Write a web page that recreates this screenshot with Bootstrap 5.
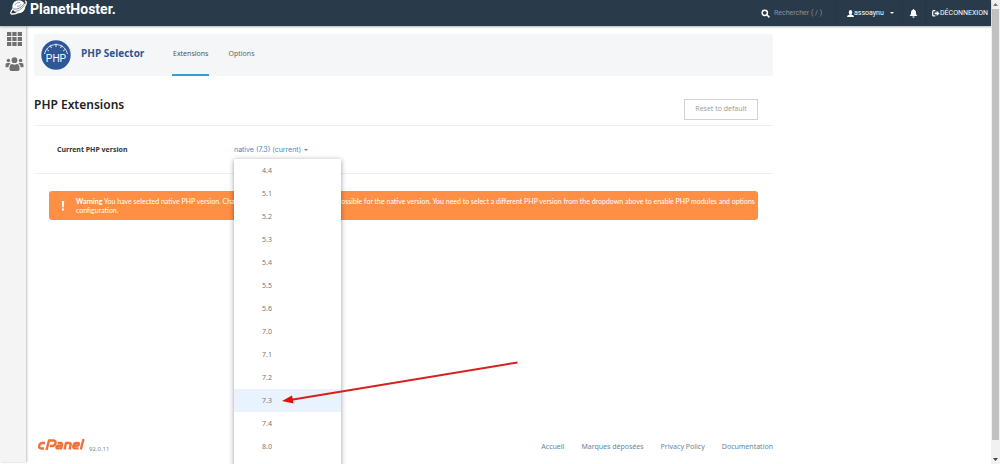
<!DOCTYPE html>
<html lang="fr">
<head>
<meta charset="utf-8">
<meta name="viewport" content="width=device-width, initial-scale=1">
<title>PHP Selector</title>
<link rel="stylesheet" href="https://cdn.jsdelivr.net/npm/bootstrap@5.3.0/dist/css/bootstrap.min.css">
<style>
body{font-family:"Noto Sans","Open Sans",sans-serif;font-size:7px;line-height:10px;color:#333;overflow:hidden;background:#fff}
a{text-decoration:none}
.page-shell{height:100vh}
.topbar{height:26px;background:#293a4a;box-shadow:0 1px 2px rgba(0,0,0,.3);z-index:3;font-family:Roboto,"Open Sans",sans-serif}
.brand-link{margin-left:10px;gap:3px;height:26px;color:#fff;font-size:14px;line-height:16px;font-weight:700}
.brand-link span{padding-top:1px}
.brand-link:hover{color:#fff}
.search-field{width:61px;background:transparent;border:0;padding:0;color:#fff;font-size:7px;line-height:10px;outline:0}
.search-field::placeholder{color:#8a949d;opacity:1}
.topbar button,.topbar .logout{height:26px;background:none;border:0;border-left:1px solid #263643;color:#fff;font-size:7px}
.topbar .account{width:67px;padding:0 8px 0 11px}
.topbar .alerts{width:23px;padding:0 6px}
.topbar .logout{width:66px;padding:0 0 0 6px;white-space:nowrap}
.caret{width:0;height:0;border:2px solid transparent;border-top-color:currentColor;border-bottom:0}
.sidebar{width:26px;background:#f4f4f4;box-shadow:1px 0 2px rgba(0,0,0,.25);padding:6px 0 0 2px;gap:11px;margin-bottom:2px}
.sidebar a{line-height:0}
.content-col{max-width:747px;padding:8px 0 0 8px}
.app-head{height:42px;background:#f5f6f8;border-radius:2px;padding-left:7px}
.app-title{font-family:"Open Sans",sans-serif;font-size:10px;line-height:14px;font-weight:700;color:#2f5590;width:91px;margin:0 0 4px 10px}
.app-tab{color:#666;display:flex;align-items:center;border-bottom:2px solid transparent;margin-right:18px;height:41px;padding:0 1px 1px}
.app-tab.active{color:#555;border-color:#3d9cce}
.head-row{height:50px;border-bottom:1px solid #efefef;padding:17px 15px 0 0}
.page-title{font-size:12px;line-height:16px;font-weight:600;color:#222;margin-bottom:9px}
.reset-btn{width:74px;height:21px;border:1px solid #d2d2d2;border-radius:0;color:#999;font-family:"Open Sans",sans-serif;font-size:7px;line-height:10px;padding:0}
.version-row{height:48px;border-bottom:1px solid #efefef;padding-left:23px}
.version-label{width:177px;font-weight:700;padding-top:1px}
.version-toggle{border:0;background:none;padding:0;color:#4289c6;font-family:Inter,Roboto,sans-serif;font-size:7px;line-height:10px;gap:3px}
.version-menu{top:33px;left:200px;width:107px;background:#fff;box-shadow:0 1px 5px rgba(0,0,0,.4);z-index:2;padding-bottom:23px}
.version-menu a{display:block;height:23px;line-height:23px;padding-left:28px;color:#777}
.version-menu a.active{background:#e8f3fd}
.warning-box{margin:17px 15px 0 15px;min-height:29px;background:#ff8f45;color:#fff;border-radius:3px;font-family:Lato,sans-serif;font-size:7px;line-height:9px;padding:0 1px 0 11px;gap:10px}
.footer-row{padding-bottom:12px}
.footer-row nav{gap:17px}
.footer-row a{color:#5f87a0}
.release{font-size:6px;color:#888;line-height:6px;margin-left:2px}
.pointer-arrow{left:282px;top:358px;z-index:5;pointer-events:none}
.scroll-rail{width:9px;background:#f1f1f1}
.scroll-rail i{height:9px}
.scroll-thumb{background:#c1c1c1;flex:1;margin:0 1px 15px}
</style>
</head>
<body>
<div class="page-shell d-flex overflow-hidden">
<div class="d-flex flex-column flex-grow-1 position-relative">
  <header class="topbar d-flex align-items-center position-relative">
    <a class="brand-link d-flex" href="#">
      <svg width="17" height="15" viewBox="0 0 17 15" fill="none" stroke="#fff"><circle cx="8.800" cy="6.700" r="6.500" fill="#fff" stroke="none"/><path d="M3.300 8.500C0 12 0 14 2.500 14c3.500.3 8.500-2.500 11.500-6.500 2.700-3.500 3-6 1-6.700" stroke-width="1.300"/><path d="M3.200 8.800c4 1.200 9.300-1.500 11.300-6" stroke="#4c5b69" stroke-width=".7"/><path d="M4 11.600c3.500 0 8-2.500 10.200-6.300" stroke="#4c5b69" stroke-width=".6"/><path d="M4.800 5c1.700-2.500 4-3 5.200-2.500M7 6.300c2 .3 3.500-.8 4-2" stroke="#7b8995" stroke-width=".8"/></svg>
      <span>PlanetHoster.</span>
    </a>
    <div class="ms-auto d-flex align-items-center">
      <label for="search" class="me-1 d-flex"><svg width="9" height="9" viewBox="0 0 9 9" fill="none" stroke="#fff" stroke-width="1.500"><circle cx="3.800" cy="3.800" r="2.600"/><path d="m5.800 5.800 2.600 2.600"/></svg></label>
      <input id="search" class="search-field" type="text" placeholder="Rechercher ( / )">
      <button type="button" class="account d-flex align-items-center"><svg width="7" height="7" viewBox="0 0 7 7" fill="#fff"><ellipse cx="3.500" cy="2.200" rx="1.700" ry="2.200"/><path d="M2.700 3.500h1.600v1L6.500 5.500 7 7H0l.5-1.500 2.200-1z"/></svg><span>assoaynu</span><i class="caret ms-auto"></i></button>
      <button type="button" class="alerts d-flex align-items-center" aria-label="Notifications"><svg width="9" height="9" viewBox="0 0 9 9" fill="#fff"><path d="M4.500 0C5 0 5 .7 5 .7 6.800 1.100 7 2.500 7 4c0 1.500.6 2.200 1.600 3H.4C1.400 6.200 2 5.500 2 4c0-1.500.2-2.900 2-3.300C4 .7 4 0 4.500 0M3.300 7.500h2.400C5.600 8.500 5 8.800 4.500 8.800s-1.100-.3-1.200-1.300"/></svg></button>
      <a href="#" class="logout d-flex align-items-center"><svg width="8" height="7" viewBox="0 0 8 7"><path d="M3.300.7H1.600Q.7.700.7 1.600v3.300q0 .9.900.9h1.700" fill="none" stroke="#fff" stroke-width="1.200"/><path d="M2.700 2.400h2V.7l2.900 2.700L4.700 6V4.300h-2z" fill="#fff"/></svg><span>DÉCONNEXION</span></a>
    </div>
  </header>
  <div class="d-flex flex-grow-1">
    <nav class="sidebar d-flex flex-column align-items-center">
      <a href="#" aria-label="Home"><svg width="15" height="14" viewBox="0 0 15 14" fill="#707070"><path d="M0 0h4.300v4H0zM5.300 0h4.300v4H5.300zM10.700 0H15v4h-4.300zM0 5h4.300v4H0zM5.300 5h4.300v4H5.300zM10.700 5H15v4h-4.300zM0 10h4.300v4H0zM5.300 10h4.300v4H5.300zM10.700 10H15v4h-4.300z"/></svg></a>
      <a href="#" aria-label="Users"><svg width="19" height="14" viewBox="0 0 19 14" fill="#707070"><circle cx="9.500" cy="3.200" r="2.900"/><circle cx="3.400" cy="3.500" r="1.700"/><circle cx="15.600" cy="3.500" r="1.700"/><path d="M4.500 13V11q0-4 2.700-4 2.300 1.300 4.600 0 2.700 0 2.700 4v2q-.8 1-2 1h-6q-1.200 0-2-1M.5 10.300V8Q.5 6 2 6h2.800l.7.700Q3.500 7.500 3.300 10.300zM18.500 10.300V8q0-2-1.500-2h-2.800l-.7.700q2 .8 2.200 3.600z"/></svg></a>
    </nav>
    <main class="content-col flex-grow-1 d-flex flex-column">
      <div class="app-head d-flex align-items-center">
        <svg width="30" height="30" viewBox="0 0 30 30"><circle cx="15" cy="15" r="14.700" fill="#2d5797"/><path d="M3.500 14A11.700 11.700 0 0 1 26.500 14" fill="none" stroke="#d9e2f0"/><path d="M15 3.500v3.500M9 5l1.500 3M21 5l-1.500 3M5 9l3 2M25 9l-3 2" stroke="#d9e2f0"/><text x="15" y="22" text-anchor="middle" fill="#fff" font-family="Liberation Sans,sans-serif" font-size="10">PHP</text></svg>
        <h1 class="app-title">PHP Selector</h1>
        <a class="app-tab active" href="#">Extensions</a>
        <a class="app-tab" href="#">Options</a>
      </div>
      <div class="head-row d-flex justify-content-between align-items-center">
        <h2 class="page-title">PHP Extensions</h2>
        <button type="button" class="btn reset-btn">Reset to default</button>
      </div>
      <div class="version-row d-flex align-items-center position-relative">
        <div id="version-label" class="version-label">Current PHP version</div>
        <button type="button" class="version-toggle d-flex align-items-center" aria-describedby="version-label" aria-expanded="true">native (7.3) (current) <i class="caret"></i></button>
        <div class="version-menu position-absolute">
          <a href="#">4.4</a><a href="#">5.1</a><a href="#">5.2</a><a href="#">5.3</a><a href="#">5.4</a><a href="#">5.5</a><a href="#">5.6</a><a href="#">7.0</a><a href="#">7.1</a><a href="#">7.2</a><a href="#" class="active">7.3</a><a href="#">7.4</a><a href="#">8.0</a>
        </div>
      </div>
      <div class="warning-box d-flex align-items-center" role="alert">
        <svg class="flex-shrink-0" width="6" height="10" viewBox="0 0 6 10" fill="#fff"><path d="M1.800 0h2.400l-.4 6.300H2.200zM2 7.500h2V9.500H2z"/></svg>
        <div><b>Warning</b> You have selected native PHP version. Changing modules and options is not possible for the native version. You need to select a different PHP version from the dropdown above to enable PHP modules and options configuration.</div>
      </div>
      <footer class="footer-row d-flex align-items-end mt-auto">
        <svg class="ms-1" width="49" height="14" viewBox="1 1 49 14" role="img" aria-label="cPanel" fill="none" stroke="#f2713a" stroke-width="2.400" stroke-linejoin="round"><path d="M8 6H5.300Q2.800 6 2.200 8.700T4.500 11.500H7M9.500 13 12 3.500h4.300q2.800 0 2.200 2.700T15 9h-2.300M20.500 6h3.200q1.700 0 1.300 1.600l-.9 3.800h-3.200q-1.800 0-1.500-1.300t2-1.300h2.700M27.500 12.500 29 6h3q2.100 0 1.600 2l-1 4.500M41.500 11.400h-3.800q-1.900 0-1.200-2.800T39.200 6h1.300q1.700 0 1.400 1.300T40.300 8.800h-3.500M43.800 12.500 46.500 2"/></svg>
        <span class="release">92.0.11</span>
        <nav class="ms-auto d-flex"><a href="#">Accueil</a><a href="#">Marques déposées</a><a href="#">Privacy Policy</a><a href="#">Documentation</a></nav>
      </footer>
    </main>
  </div>
  <svg class="pointer-arrow position-absolute" width="238" height="48" viewBox="0 0 238 48" aria-hidden="true"><path d="M8 42 235.500 4.500" stroke="#d91f1f" stroke-width="2"/><path d="M0 43 10 37.500 11.500 45.500z" fill="#e80c0c"/></svg>
</div>
<div class="scroll-rail d-flex flex-column" aria-hidden="true">
  <i class="d-flex align-items-center justify-content-center"><svg width="5" height="3" viewBox="0 0 5 3" fill="#777"><path d="M0 3 2.500 0 5 3z"/></svg></i>
  <div class="scroll-thumb"></div>
  <i class="d-flex align-items-center justify-content-center"><svg width="5" height="3" viewBox="0 0 5 3" fill="#444"><path d="M0 0h5L2.500 3z"/></svg></i>
</div>
</div>
<script src="https://cdn.jsdelivr.net/npm/bootstrap@5.3.0/dist/js/bootstrap.bundle.min.js"></script>
</body>
</html>
